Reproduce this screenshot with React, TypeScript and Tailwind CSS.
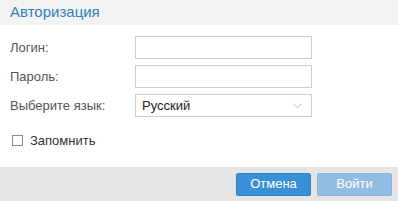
import React from 'react';

// Login dialog: header, form rows, footer with actions
const FONT = { fontFamily: '"Liberation Sans", Arial, sans-serif' };

const Row: React.FC<{ label: string; children: React.ReactNode }> = ({ label, children }) => (
  <div className="flex items-center h-[23px]">
    <div className="w-[125px] text-[13px] text-[#555]">{label}</div>
    {children}
  </div>
);

export default function App() {
  return (
    <div className="w-[398px] h-[201px] bg-white flex flex-col overflow-hidden" style={FONT}>
      {/* Header */}
      <div className="h-[25px] bg-[#f3f3f3] flex items-center pl-[10px]">
        <span className="text-[15px] text-[#2f7fc2]">Авторизация</span>
      </div>

      {/* Form */}
      <div className="flex-1 pt-[11px] pl-[10px] flex flex-col gap-[6px]">
        <Row label="Логин:">
          <input className="w-[177px] h-[23px] border border-[#cccccc] outline-none px-[6px] text-[13px]" />
        </Row>
        <Row label="Пароль:">
          <input type="password" className="w-[177px] h-[23px] border border-[#cccccc] outline-none px-[6px] text-[13px]" />
        </Row>
        <Row label="Выберите язык:">
          <div className="w-[177px] h-[23px] border border-[#cccccc] flex items-center justify-between pl-[6px] pr-[9px]">
            <span className="text-[13px] text-[#222]">Русский</span>
            <svg width="9" height="6" viewBox="0 0 9 6" fill="none">
              <path d="M0.5 0.8 L4.5 4.8 L8.5 0.8" stroke="#b5b5b5" strokeWidth="1" />
            </svg>
          </div>
        </Row>
        <div className="flex items-center gap-[7px] mt-[8px] pl-[2px]">
          <div className="w-[11px] h-[11px] border border-[#8a8a8a] bg-white" />
          <span className="text-[13px] text-[#333]">Запомнить</span>
        </div>
      </div>

      {/* Footer */}
      <div className="h-[34px] bg-[#e5e5e5] flex items-center justify-end gap-[6px] pr-[6px]">
        <button className="w-[75px] h-[23px] rounded-[2px] bg-[#3a90d6] border border-[#2f80c4] text-white text-[13px]">
          Отмена
        </button>
        <button className="w-[75px] h-[23px] rounded-[2px] bg-[#91bde3] border border-[#88b5dc] text-white text-[13px]">
          Войти
        </button>
      </div>
    </div>
  );
}
